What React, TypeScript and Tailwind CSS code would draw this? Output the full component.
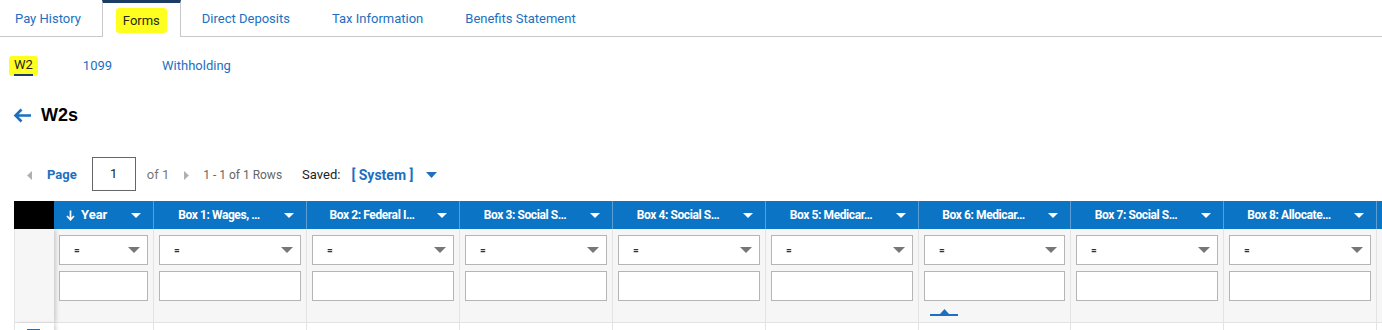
import React from "react";

const cols: { label: string; w: number; left?: boolean; marker?: boolean; blank?: boolean }[] = [
  { label: "Year", w: 100, left: true },
  { label: "Box 1: Wages, …", w: 153 },
  { label: "Box 2: Federal I…", w: 153 },
  { label: "Box 3: Social S…", w: 153 },
  { label: "Box 4: Social S…", w: 153 },
  { label: "Box 5: Medicar…", w: 153 },
  { label: "Box 6: Medicar…", w: 152, marker: true },
  { label: "Box 7: Social S…", w: 153 },
  { label: "Box 8: Allocate…", w: 153 },
  { label: "", w: 153, blank: true },
];

function Caret({ color, w = 10, h = 5 }: { color: string; w?: number; h?: number }) {
  return (
    <svg width={w} height={h} viewBox={`0 0 ${w} ${h}`} className="shrink-0">
      <polygon points={`0,0 ${w},0 ${w / 2},${h}`} fill={color} />
    </svg>
  );
}

export default function App() {
  const font = { fontFamily: "Roboto, 'Liberation Sans', sans-serif" };
  return (
    <div className="w-[1382px] h-[330px] overflow-hidden bg-white text-[13px]" style={font}>
      {/* Tabs */}
      <div className="flex h-[37px] border-b border-[#c9c9c9] text-[13px] text-[#1d6fc0]">
        <div className="flex items-center pt-[2px] pl-[15px] pr-[21px]">Pay History</div>
        <div className="flex items-center pt-[1px] px-[13px] border-x border-[#c9c9c9] border-t-[3px] border-t-[#1b3d64] bg-white h-[37px] -mb-px">
          <span className="bg-[#ffff1f] text-[#1f2a10] px-[7px] py-[3px] rounded-[3px]">Forms</span>
        </div>
        <div className="flex items-center pt-[2px] px-[21px]">Direct Deposits</div>
        <div className="flex items-center pt-[2px] px-[21px]">Tax Information</div>
        <div className="flex items-center pt-[2px] px-[21px]">Benefits Statement</div>
      </div>

      {/* Sub tabs */}
      <div className="flex items-center h-[20px] mt-[19px] text-[13px] text-[#1d6fc0]">
        <div className="ml-[9px] bg-[#ffff1f] px-[5px] h-[20px] flex items-start rounded-[3px]">
          <span className="text-[#222] leading-[18px] h-[20px] border-b-2 border-[#1b3d64]">W2</span>
        </div>
        <span className="ml-[45px]">1099</span>
        <span className="ml-[50px]">Withholding</span>
      </div>

      {/* Heading */}
      <div className="flex items-center h-[22px] mt-[28px] pl-[13px]">
        <svg width="19" height="15" viewBox="0 0 19 15" className="shrink-0">
          <path d="M18 7.5H2.5M8.5 1.5L2.5 7.5L8.5 13.5" stroke="#1d6fc0" strokeWidth="2.6" fill="none" />
        </svg>
        <span className="ml-[9px] text-[18px] font-bold text-black" style={{ fontFamily: "'Liberation Sans', Arial, sans-serif" }}>
          W2s
        </span>
      </div>

      {/* Pagination */}
      <div className="flex items-center h-[34px] mt-[31px]">
        <svg width="5" height="9" viewBox="0 0 5 9" className="ml-[27px] mt-[2px]">
          <polygon points="5,0 5,9 0,4.5" fill="#b0b0b0" />
        </svg>
        <span className="ml-[15px] mt-[2px] font-bold text-[#1d6fc0]">Page</span>
        <div className="ml-[15px] w-[44px] h-[34px] border border-[#666] flex items-center justify-center text-[#222]">1</div>
        <span className="ml-[11px] mt-[2px] text-[#777]">of 1</span>
        <svg width="5" height="9" viewBox="0 0 5 9" className="ml-[15px] mt-[2px]">
          <polygon points="0,0 0,9 5,4.5" fill="#b0b0b0" />
        </svg>
        <span className="ml-[14px] mt-[2px] text-[12px] text-[#666]">1 - 1 of 1 Rows</span>
        <span className="ml-[20px] mt-[2px] text-[#222]">Saved:</span>
        <span className="ml-[11px] mt-[2px] font-bold text-[14px] text-[#1d6fc0]">[ System ]</span>
        <span className="ml-[13px] mt-[2px]">
          <Caret color="#1d6fc0" w={11} h={6} />
        </span>
      </div>

      {/* Grid */}
      <div className="mt-[10px] ml-[14px] w-[1600px]">
        {/* header row */}
        <div className="flex h-[28px]">
          <div className="w-[40px] bg-black shrink-0" />
          {cols.map((c, i) => (
            <div
              key={i}
              style={{ width: c.w }}
              className="shrink-0 bg-[#0c74c4] border-r border-[#5d9dd6] flex items-center text-white font-bold text-[12px] tracking-[-0.4px] pr-[12px]"
            >
              {c.left ? (
                <span className="flex-1 pl-[12px] whitespace-nowrap flex items-center">
                  <svg width="9" height="11" viewBox="0 0 9 11" className="mr-[6px]">
                    <path d="M4.5 0.5V9.5M1 6L4.5 9.8L8 6" stroke="#fff" strokeWidth="1.7" fill="none" />
                  </svg>
                  <span className="text-[13px] tracking-[0px]">{c.label}</span>
                </span>
              ) : (
                <span className="flex-1 text-center whitespace-nowrap">{c.label}</span>
              )}
              {!c.blank && <Caret color="#ffffff" w={10} h={5} />}
            </div>
          ))}
        </div>
        {/* filter row */}
        <div className="flex h-[94px]">
          <div className="w-[40px] shrink-0 bg-[#f6f6f6] border-l border-b border-[#e3e3e3] relative z-10 shadow-[3px_0_4px_-1px_rgba(0,0,0,0.18)]" />
          {cols.map((c, i) => (
            <div
              key={i}
              style={{ width: c.w }}
              className="shrink-0 bg-[#f6f6f6] border-r border-b border-[#e3e3e3] px-[5px] pt-[6px] flex flex-col"
            >
              <div className="h-[30px] bg-white border border-[#b5b5b5] flex items-center pl-[14px] pr-[7px]">
                <span className="flex-1 text-[10px] font-bold text-[#333]">{c.blank ? "" : "="}</span>
                {!c.blank && <Caret color="#777777" w={12} h={6} />}
              </div>
              <div className="h-[30px] mt-[6px] bg-white border border-[#b5b5b5]" />
              {c.marker && (
                <div className="mt-[8px] ml-[6px] w-[28px] flex flex-col items-center">
                  <svg width="9" height="5" viewBox="0 0 9 5">
                    <polygon points="0,5 9,5 4.5,0" fill="#1d6fc0" />
                  </svg>
                  <div className="w-[28px] h-[2px] bg-[#1d6fc0]" />
                </div>
              )}
            </div>
          ))}
        </div>
        {/* body row */}
        <div className="flex h-[30px]">
          <div className="w-[40px] shrink-0 bg-white border-l border-[#e3e3e3] relative z-10 shadow-[3px_0_4px_-1px_rgba(0,0,0,0.18)] pt-[6px] pl-[12px]">
            <div className="w-[13px] h-[13px] border-2 border-[#1d6fc0] bg-white" />
          </div>
          {cols.map((c, i) => (
            <div key={i} style={{ width: c.w }} className="shrink-0 bg-white border-r border-[#e3e3e3]" />
          ))}
        </div>
      </div>
    </div>
  );
}
